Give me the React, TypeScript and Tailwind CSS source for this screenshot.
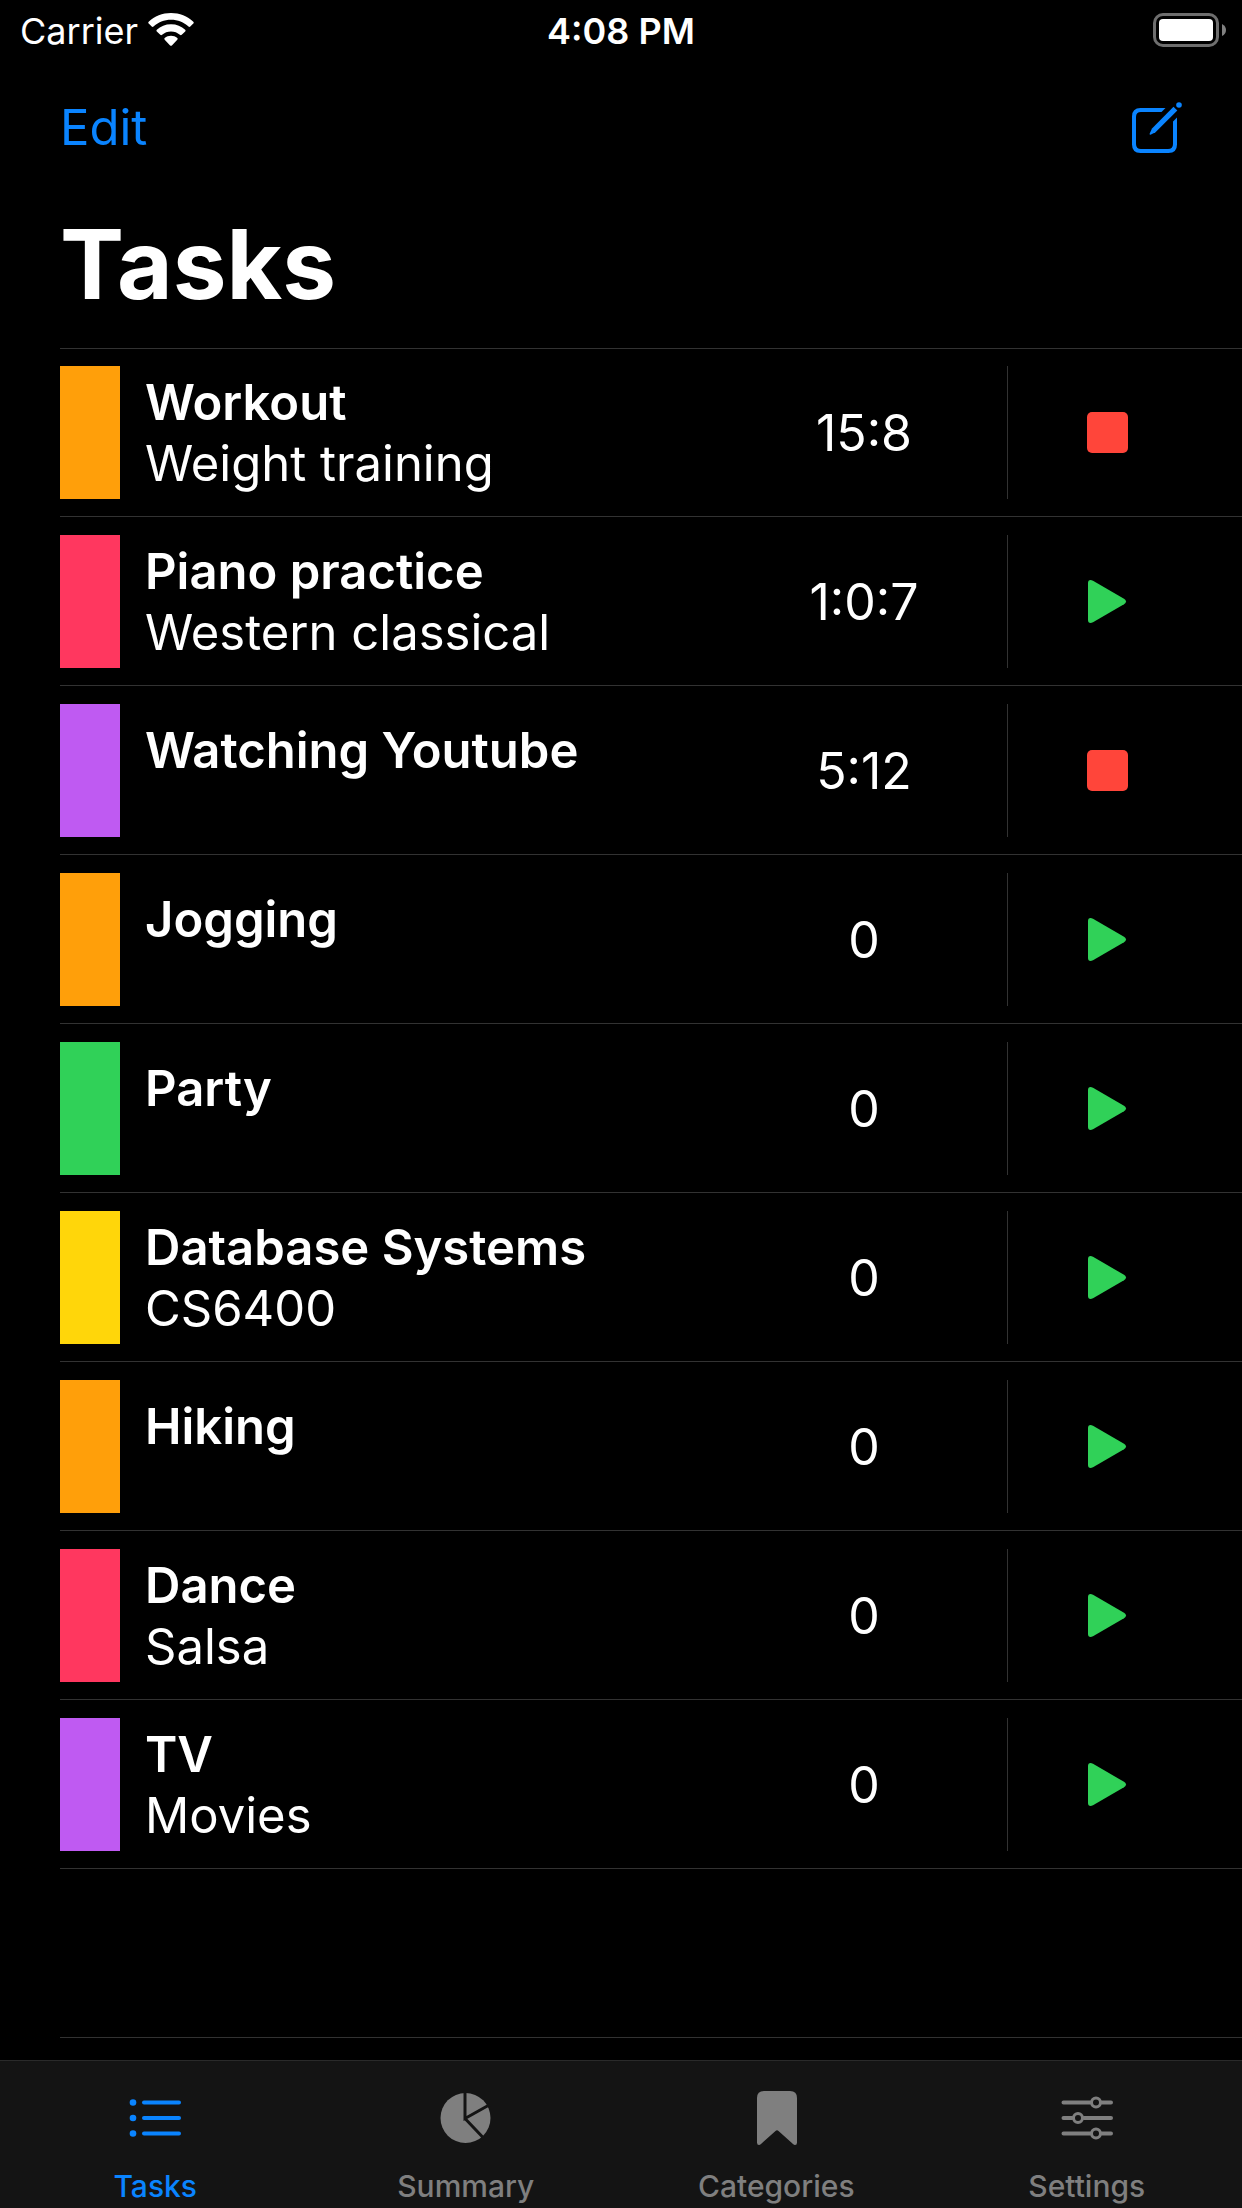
import React from "react";

type Task = {
  name: string;
  detail?: string;
  time: string;
  running?: boolean;
  color: string;
};

const tasks: Task[] = [
  { name: "Workout", detail: "Weight training", time: "15:8", running: true, color: "bg-[#ff9f0a]" },
  { name: "Piano practice", detail: "Western classical", time: "1:0:7", color: "bg-[#ff375f]" },
  { name: "Watching Youtube", time: "5:12", running: true, color: "bg-[#bf5af2]" },
  { name: "Jogging", time: "0", color: "bg-[#ff9f0a]" },
  { name: "Party", time: "0", color: "bg-[#30d158]" },
  { name: "Database Systems", detail: "CS6400", time: "0", color: "bg-[#ffd60a]" },
  { name: "Hiking", time: "0", color: "bg-[#ff9f0a]" },
  { name: "Dance", detail: "Salsa", time: "0", color: "bg-[#ff375f]" },
  { name: "TV", detail: "Movies", time: "0", color: "bg-[#bf5af2]" },
];

function WifiIcon() {
  return (
    <svg width="46" height="34" viewBox="0 0 46 34" fill="currentColor" aria-hidden="true">
      <path d="M23 0C31.600 0 39.500 3.300 45.300 8.800Q46.200 9.700 45.300 10.600L42.300 13.500Q41.400 14.300 40.500 13.500C35.900 9.200 29.800 6.700 23 6.700S10.100 9.200 5.500 13.500Q4.600 14.300 3.700 13.500L.7 10.600Q-.2 9.700 .7 8.800C6.500 3.300 14.400 0 23 0Z" />
      <path d="M23 11.200C28.500 11.200 33.500 13.200 37.200 16.700Q38.100 17.600 37.200 18.500L33.700 21.800Q32.800 22.600 31.900 21.800C29.500 19.700 26.400 18.500 23 18.500S16.500 19.700 14.100 21.800Q13.200 22.600 12.300 21.800L8.800 18.500Q7.900 17.600 8.800 16.700C12.500 13.200 17.500 11.200 23 11.200Z" />
      <path d="M23 22.800C25.400 22.800 27.600 23.600 29.300 25Q30.200 25.800 29.300 26.700L23.900 32.400Q23 33.200 22.100 32.400L16.700 26.700Q15.800 25.800 16.700 25C18.400 23.600 20.600 22.800 23 22.800Z" />
    </svg>
  );
}

function BatteryIcon() {
  return (
    <svg width="73" height="34" viewBox="0 0 73 34" aria-hidden="true">
      <rect x="1.500" y="1.500" width="63" height="31" rx="8.500" fill="none" stroke="#6e6e6e" strokeWidth="3" />
      <rect x="6" y="6" width="54" height="22" rx="4" fill="#fff" />
      <path d="M69 11Q73 13 73 17T69 23Z" fill="#808080" />
    </svg>
  );
}

function ComposeIcon() {
  return (
    <svg width="50" height="51" viewBox="0 0 50 51" aria-hidden="true">
      <path
        d="M33.500 6H8.500Q0 6 0 14.500V42.500Q0 51 8.500 51H36.500Q45 51 45 42.500V15.500L41 19.500V42Q41 47 36 47H9Q4 47 4 42V15Q4 10 9 10H29.500Z"
        fill="currentColor"
      />
      <path d="M41.500 4.800L45.300 8.600L23.500 30.300L18.500 32.700Q17.400 32.900 17.600 31.800L20 26.500Z" fill="currentColor" />
      <circle cx="47" cy="3" r="2.800" fill="currentColor" />
    </svg>
  );
}

function StopIcon() {
  return (
    <svg width="41" height="41" viewBox="0 0 41 41" aria-hidden="true">
      <rect width="41" height="41" rx="5" fill="#ff453a" />
    </svg>
  );
}

function PlayIcon() {
  return (
    <svg width="41" height="43" viewBox="0 0 41 43" aria-hidden="true">
      <path d="M1 3Q1 0 3.500 0Q4.500 0 6 .8L37 18.800Q39 20 39 21.500T37 24.200L6 42.200Q4.500 43 3.500 43Q1 43 1 40Z" fill="#30d158" />
    </svg>
  );
}

function ListIcon() {
  return (
    <svg width="52" height="56" viewBox="0 0 52 56" fill="currentColor" aria-hidden="true">
      {[12.5, 28, 43.5].map((y) => (
        <g key={y}>
          <circle cx="4" cy={y} r="3.300" />
          <rect x="13" y={y - 2} width="39" height="4" rx="2" />
        </g>
      ))}
    </svg>
  );
}

function PieIcon() {
  return (
    <svg width="52" height="56" viewBox="0 0 52 56" aria-hidden="true">
      <circle cx="25.500" cy="28" r="25" fill="currentColor" />
      <path d="M25 1V28.500L50 14.500M25 28.500L44 48.500" fill="none" stroke="#141414" strokeWidth="3" />
    </svg>
  );
}

function BookmarkIcon() {
  return (
    <svg width="52" height="56" viewBox="0 0 52 56" aria-hidden="true">
      <path
        d="M13 1H40Q47 1 47 8V52.500Q47 55 45 55Q44 55 43 54L28.500 41Q27 39.500 25.500 41L11 54Q10 55 9 55Q7 55 7 52.500V8Q7 1 14 1Z"
        fill="currentColor"
      />
    </svg>
  );
}

function SlidersIcon() {
  return (
    <svg width="52" height="56" viewBox="0 0 52 56" fill="none" stroke="currentColor" strokeWidth="4" strokeLinecap="round" aria-hidden="true">
      <path d="M2.500 12.500H29M41 12.500H50M2.500 28H11M23 28H50M2.500 43.500H29M41 43.500H50" />
      <circle cx="35" cy="12.500" r="4.500" strokeWidth="3" />
      <circle cx="17" cy="28" r="4.500" strokeWidth="3" />
      <circle cx="35" cy="43.500" r="4.500" strokeWidth="3" />
    </svg>
  );
}

function StatusBar() {
  return (
    <div className="grid h-[60px] grid-cols-3 items-center px-4 text-4xl">
      <div className="flex items-center gap-2.5 pl-1">
        <span className="pt-0.5">Carrier</span>
        <WifiIcon />
      </div>
      <span className="pt-0.5 text-center font-semibold">4:08 PM</span>
      <div className="flex justify-end">
        <BatteryIcon />
      </div>
    </div>
  );
}

function TaskRow({ task }: { task: Task }) {
  return (
    <li className="flex border-b border-[#323232] pt-[18px] pb-[17px] first:border-t first:pt-[17px]">
      <div className={`w-[60px] shrink-0 ${task.color}`} />
      <div className={`flex h-[133px] min-w-0 flex-1 flex-col justify-center pl-[25px] text-[49px] leading-[61px] ${task.detail ? "" : "pb-10"}`}>
        <h2 className="truncate font-semibold">{task.name}</h2>
        {task.detail && <p className="truncate">{task.detail}</p>}
      </div>
      <div className="flex w-[286px] items-center justify-center pt-0.5 text-[50px] leading-[61px]">{task.time}</div>
      <div className="mr-9 flex w-[199px] items-center justify-center border-l border-[#323232]">
        <button type="button" aria-label={`${task.running ? "Stop" : "Start"} ${task.name}`}>
          {task.running ? <StopIcon /> : <PlayIcon />}
        </button>
      </div>
    </li>
  );
}

const tabs = [
  { label: "Tasks", icon: <ListIcon />, active: true },
  { label: "Summary", icon: <PieIcon /> },
  { label: "Categories", icon: <BookmarkIcon /> },
  { label: "Settings", icon: <SlidersIcon /> },
];

export default function App() {
  return (
    <div className="flex min-h-screen flex-col bg-black font-['Inter',sans-serif] text-white">
      <StatusBar />
      <header className="pl-[60px]">
        <div className="flex h-[132px] items-center justify-between pt-0.5 pr-[60px] text-[#0a84ff]">
          <button type="button" className="text-[49px] leading-[61px]">Edit</button>
          <button type="button" aria-label="New task">
            <ComposeIcon />
          </button>
        </div>
        <h1 className="h-[156px] pt-3 text-[96px] leading-[120px] font-bold">Tasks</h1>
      </header>
      <main className="flex-1 pl-[60px]">
        <ul>
          {tasks.map((task) => (
            <TaskRow key={task.name} task={task} />
          ))}
        </ul>
        <div className="h-[169px] border-b border-[#323232]" />
      </main>
      <nav className="grid h-[148px] grid-cols-4 border-t border-[#2a2a2a] bg-[#141414] text-[30px] font-medium text-[#7f7f7f]">
        {tabs.map((tab) => (
          <a
            key={tab.label}
            href="#"
            aria-current={tab.active ? "page" : undefined}
            className={`flex flex-col items-center gap-5 pt-[29px] leading-[40px] ${tab.active ? "text-[#0a84ff]" : ""}`}
          >
            {tab.icon}
            <span>{tab.label}</span>
          </a>
        ))}
      </nav>
    </div>
  );
}
